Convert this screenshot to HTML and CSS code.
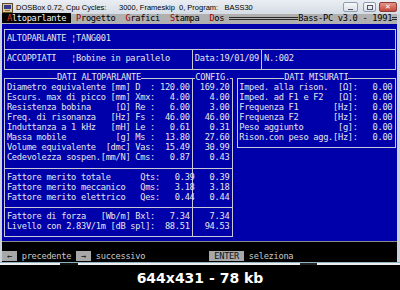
FILE: index.html
```html
<!DOCTYPE html>
<html lang="it">

<head>
    <meta charset="UTF-8">
    <meta name="viewport" content="width=device-width, initial-scale=1.0">
    <title>DOSBox - BASS30</title>
    <link rel="stylesheet" href="styles.css">
</head>

<body>
    <div class="window">
        <div class="titlebar">
            <svg class="app-icon" viewBox="0 0 11 11">
                <rect x="0.5" y="1.5" width="10" height="9" fill="#d9c89a" stroke="#5a4a2a" />
                <rect x="2" y="3" width="7" height="4" fill="#3a3a8a" />
                <rect x="3" y="8" width="5" height="1" fill="#8a6a2a" />
            </svg>
            <span class="title">DOSBox 0.72, Cpu Cycles:      3000, Frameskip  0, Program:   BASS30</span>
            <div class="win-buttons">
                <span class="wbtn min"><i></i></span>
                <span class="wbtn max"><i></i></span>
                <span class="wbtn close">✕</span>
            </div>
        </div>

        <div class="screen">
            <div class="menubar"><span class="menu on"> <em>A</em>ltoparlante </span> <span class="menu"><em>P</em>rogetto</span>  <span class="menu"><em>G</em>rafici</span>  <span class="menu"><em>S</em>tampa</span>  <span class="menu"><em>D</em>os</span> <span class="rule wide"></span><span class="brand">Bass-PC v3.0 - 1991</span><span class="rule"></span></div>

            <div class="desk">
                <div class="doc">
                    <div class="doc-row">ALTOPARLANTE ¦TANG001</div>
                    <div class="doc-row split">
                        <div class="cell who">ACCOPPIATI   ¦Bobine in parallelo</div>
                        <div class="cell date">Data:19/01/09</div>
                        <div class="cell num">N.:002</div>
                    </div>
                </div>

                <div class="panels">
                    <div class="specs">
                        <div class="panel spec-main">
                            <div class="panel-title"><span>DATI ALTOPARLANTE</span></div>
                            <div class="sec first">
                                <div>Diametro equivalente [mm] D  : 120.00</div>
                                <div>Escurs. max di picco [mm] Xmx:   4.00</div>
                                <div>Resistenza bobina     [Ω] Re :   6.00</div>
                                <div>Freq. di risonanza   [Hz] Fs :  46.00</div>
                                <div>Induttanza a 1 kHz   [mH] Le :   0.61</div>
                                <div>Massa mobile          [g] Ms :  13.80</div>
                                <div>Volume equivalente  [dmc] Vas:  15.49</div>
                                <div>Cedevolezza sospen.[mm/N] Cms:   0.87</div>
                            </div>
                            <div class="sec mid">
                                <div>Fattore merito totale      Qts:   0.39</div>
                                <div>Fattore merito meccanico   Qms:   3.18</div>
                                <div>Fattore merito elettrico   Qes:   0.44</div>
                            </div>
                            <div class="sec last">
                                <div>Fattore di forza   [Wb/m] Bxl:   7.34</div>
                                <div>Livello con 2.83V/1m [dB spl]:  88.51</div>
                            </div>
                        </div>

                        <div class="panel spec-config">
                            <div class="panel-title"><span>CONFIG.</span></div>
                            <div class="sec first">
                                <div>169.20</div>
                                <div>4.00</div>
                                <div>3.00</div>
                                <div>46.00</div>
                                <div>0.31</div>
                                <div>27.60</div>
                                <div>30.99</div>
                                <div>0.43</div>
                            </div>
                            <div class="sec mid">
                                <div>0.39</div>
                                <div>3.18</div>
                                <div>0.44</div>
                            </div>
                            <div class="sec last">
                                <div>7.34</div>
                                <div>94.53</div>
                            </div>
                        </div>
                    </div>

                    <div class="panel measured">
                        <div class="panel-title"><span>DATI MISURATI</span></div>
                        <div class="rows">
                            <div>Imped. alla rison.  [Ω]:   0.00</div>
                            <div>Imped. ad F1 e F2   [Ω]:   0.00</div>
                            <div>Frequenza F1       [Hz]:   0.00</div>
                            <div>Frequenza F2       [Hz]:   0.00</div>
                            <div>Peso aggiunto       [g]:   0.00</div>
                            <div>Rison.con peso agg.[Hz]:   0.00</div>
                        </div>
                    </div>
                </div>
            </div>

            <div class="bottom">
                <div class="keys"><span class="key"> ← </span><span class="hint"> precedente </span><span class="key"> → </span><span class="hint"> successivo</span>             <span class="key"> ENTER </span><span class="hint"> seleziona</span></div>
            </div>
        </div>

        <div class="frame-edge"></div>
        <div class="strip"></div>
        <div class="banner">644x431 - 78 kb</div>
    </div>
</body>

</html>
```

FILE: styles.css
```css
:root {
    --cw: 4.943px;
    --rh: 9.92px;
    --blue: #0000aa;
    --fg: #e6e6ee;
    --line: #c8c8d6;
}

html,
body {
    margin: 0;
}

body {
    width: 400px;
    height: 290px;
    overflow: hidden;
    background: #000;
}

.window {
    background: #cbd4de;
}

/* barra del titolo */
.titlebar {
    height: 14px;
    display: flex;
    align-items: center;
    padding-left: 2px;
    background: linear-gradient(#eaeef3, #d5dce4);
    font-family: "Liberation Sans", Arial, sans-serif;
    font-size: 7.5px;
    color: #000;
}

.app-icon {
    width: 11px;
    height: 11px;
    margin-right: 3px;
}

.title {
    flex: 1;
    white-space: pre;
}

.win-buttons {
    display: flex;
    align-items: center;
    margin-right: 3px;
}

.wbtn {
    height: 8px;
    display: flex;
    align-items: center;
    justify-content: center;
    box-sizing: content-box;
    border: 1px solid #8e9cb1;
    border-radius: 2px;
    background: linear-gradient(#f6f8fa, #dbe1e9);
}

.wbtn.min {
    width: 13px;
    margin-right: 5px;
}

.wbtn.min i {
    width: 5px;
    height: 1px;
    margin-top: 4px;
    background: #556;
}

.wbtn.max {
    width: 11px;
    margin-right: 3px;
}

.wbtn.max i {
    width: 4px;
    height: 3px;
    border: 1px solid #556;
}

.wbtn.close {
    width: 16px;
    border-color: #8c3c34;
    background: linear-gradient(#e49488, #c6463c);
    color: #fff;
    font-family: "DejaVu Sans", sans-serif;
    font-size: 7px;
    font-weight: bold;
}

/* schermo DOS */
.screen {
    margin-left: 2px;
    width: calc(var(--cw) * 80);
    font-family: "DejaVu Sans Mono", monospace;
    font-size: 8.7px;
    letter-spacing: -0.294px;
    line-height: var(--rh);
    color: var(--fg);
}

.menubar,
.doc-row,
.cell,
.panel-title span,
.sec div,
.rows div,
.keys {
    white-space: pre;
}

.menubar {
    height: var(--rh);
    background: #b0b0b0;
    color: #000;
}

.menu em {
    font-style: normal;
    color: #a80000;
}

.menu.on {
    background: #000;
    color: #f0f0f0;
}

.menu.on em {
    color: #e03a2a;
}

.rule {
    display: inline-block;
    width: var(--cw);
    height: 1px;
    border-top: 1px solid #2a2a2a;
    border-bottom: 1px solid #2a2a2a;
    vertical-align: middle;
}

.rule.wide {
    width: calc(var(--cw) * 14);
}

.desk {
    height: calc(var(--rh) * 22);
    box-sizing: border-box;
    padding: calc(var(--rh) / 2) 0 0 calc(var(--cw) / 2);
    background: var(--blue);
    border-bottom: 1px solid #8c8c8c;
}

.doc {
    width: calc(var(--cw) * 79 + 1px);
    box-sizing: border-box;
    border: 1px solid var(--line);
}

.doc-row {
    height: calc(var(--rh) * 2 - 1px);
    display: flex;
    align-items: center;
    padding-left: calc(var(--cw) / 2 - 1px);
}

.doc-row.split {
    height: calc(var(--rh) * 2);
    box-sizing: border-box;
    padding-left: 0;
    align-items: stretch;
    border-top: 1px solid var(--line);
    white-space: normal;
}

.cell {
    display: flex;
    align-items: center;
    box-sizing: border-box;
    padding-left: calc(var(--cw) / 2 - 1px);
}

.cell.who {
    width: calc(var(--cw) * 38 - 1px);
}

.cell.date {
    width: calc(var(--cw) * 14);
    border-left: 1px solid var(--line);
}

.cell.num {
    flex: 1;
    border-left: 1px solid var(--line);
}

.panels {
    display: flex;
    align-items: flex-start;
    margin-top: calc(var(--rh) - 1px);
}

.specs {
    display: flex;
}

.panel {
    box-sizing: border-box;
    border: 1px solid var(--line);
}

.panel-title {
    height: var(--rh);
    margin-top: calc(var(--rh) / -2 - 1px);
    display: flex;
    justify-content: center;
}

.panel-title span {
    background: var(--blue);
}

.spec-main {
    width: calc(var(--cw) * 38 + 1px);
}

.spec-main .sec,
.measured .rows {
    padding-left: calc(var(--cw) / 2 - 1px);
}

.spec-config {
    width: calc(var(--cw) * 8);
    border-left: none;
}

.spec-config .sec {
    text-align: right;
    padding-right: calc(var(--cw) / 2);
}

.sec.first {
    padding-bottom: calc(var(--rh) / 2);
}

.sec.mid,
.sec.last {
    border-top: 1px solid var(--line);
    padding-top: calc(var(--rh) / 2 - 1px);
}

.sec.mid {
    padding-bottom: calc(var(--rh) / 2);
}

.sec.last {
    padding-bottom: calc(var(--rh) / 2 - 1px);
}

.measured {
    width: calc(var(--cw) * 32 + 1px);
    margin-left: calc(var(--cw) - 1px);
    padding-bottom: calc(var(--rh) / 2 - 1px);
}

.bottom {
    padding-top: var(--rh);
    background: #000;
}

.keys {
    height: var(--rh);
}

.key {
    background: #a8a8a8;
    color: #111;
}

.hint {
    color: #c8c8c8;
}

/* bordo inferiore e didascalia */
.frame-edge {
    height: 1px;
    background: #8fb0c0;
}

.strip {
    height: 2px;
    background: linear-gradient(90deg, #eee 60px, #111 60px 78px, #eee 78px 300px, #222 300px 317px, #eee 317px);
}

.banner {
    height: 25px;
    padding-top: 1px;
    box-sizing: border-box;
    display: flex;
    align-items: center;
    justify-content: center;
    background: #000;
    color: #fff;
    font-family: "DejaVu Sans", sans-serif;
    font-size: 14px;
    font-weight: bold;
}
```
